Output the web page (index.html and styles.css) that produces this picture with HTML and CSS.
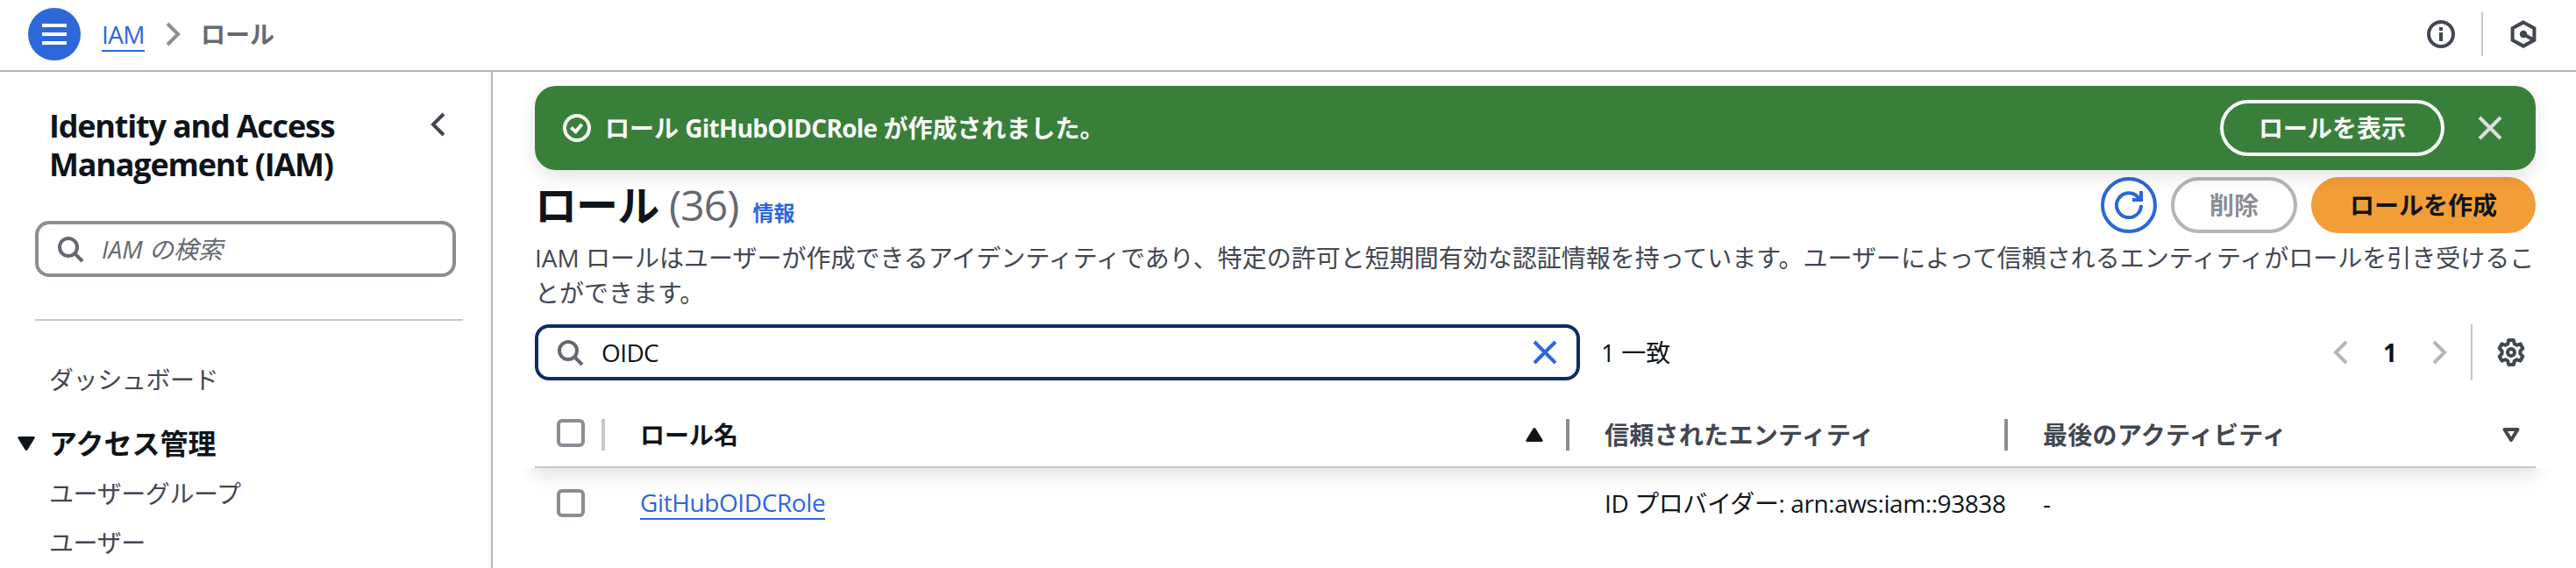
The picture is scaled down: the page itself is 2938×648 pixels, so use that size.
FILE: index.html
```html
<!DOCTYPE html>
<html lang="ja">
<head>
<meta charset="utf-8">
<title>IAM ロール</title>
<link rel="stylesheet" href="styles.css">
</head>
<body>
<header class="topbar">
  <button class="menu-btn" aria-label="メニュー"><svg class="icon" viewBox="0 0 16 16"><path d="M1 3h14M1 8h14M1 13h14"/></svg></button>
  <nav class="crumbs">
    <a class="link crumb-link" href="#">IAM</a>
    <svg class="icon crumb-sep" viewBox="0 0 16 16"><path d="m5 2 6 6-6 6"/></svg>
    <span class="crumb-current">ロール</span>
  </nav>
  <div class="tools">
    <svg class="icon" viewBox="0 0 16 16"><circle cx="8" cy="8" r="7"/><path d="M8 12V7M8 6V4"/></svg>
    <span class="tools-divider"></span>
    <svg class="icon" viewBox="0 0 16 16"><path d="M8 1.200 14.200 4.600v6.800L8 14.800 1.800 11.400V4.600z"/><circle class="solid" cx="8" cy="8" r="1.100"/><path d="m8.500 8.200 5 2.900"/></svg>
  </div>
</header>
<div class="shell">
  <aside class="sidebar">
    <div class="side-head">
      <h2 class="side-title">Identity and Access<br>Management (IAM)</h2>
      <svg class="icon side-close" viewBox="0 0 16 16"><path d="M11 2 5 8l6 6"/></svg>
    </div>
    <div class="search side-search">
      <svg class="icon search-icon" viewBox="0 0 16 16"><circle cx="7" cy="7" r="5"/><path d="m10.500 10.500 4.500 4.500"/></svg>
      <span class="placeholder">IAM の検索</span>
    </div>
    <hr class="side-rule">
    <ul class="side-nav">
      <li class="nav-item nav-first">ダッシュボード</li>
      <li class="nav-item nav-section"><svg class="caret" viewBox="0 0 20 16"><path d="M2 0h16q2.500 0 1.500 2L11.500 15q-1.500 2-3 0L.5 2Q-.5 0 2 0z"/></svg>アクセス管理</li>
      <li class="nav-item">ユーザーグループ</li>
      <li class="nav-item">ユーザー</li>
    </ul>
  </aside>
  <main class="main">
    <section class="flash">
      <svg class="icon" viewBox="0 0 16 16"><circle cx="8" cy="8" r="7"/><path d="m4.700 7.800 2.600 2.300 3.500-4.200"/></svg>
      <span class="flash-text">ロール <span class="flash-name">GitHubOIDCRole</span> が作成されました。</span>
      <button class="btn btn-flash">ロールを表示</button>
      <svg class="icon flash-close" viewBox="0 0 16 16"><path d="m2 2 12 12M14 2 2 14"/></svg>
    </section>
    <div class="page-head">
      <h1 class="page-title">ロール <span class="count">(36)</span></h1>
      <a class="info" href="#">情報</a>
      <div class="actions">
        <button class="btn btn-icon" aria-label="更新"><svg class="icon" viewBox="0 0 16 16"><path d="M15 8a7 7 0 1 1-1.800-4.600L14.500 5M15 0v5h-5"/></svg></button>
        <button class="btn btn-disabled">削除</button>
        <button class="btn btn-primary">ロールを作成</button>
      </div>
    </div>
    <p class="desc">IAM ロールはユーザーが作成できるアイデンティティであり、特定の許可と短期間有効な認証情報を持っています。ユーザーによって信頼されるエンティティがロールを引き受けるこ<br>とができます。</p>
    <div class="filter-row">
      <div class="search filter">
        <svg class="icon search-icon" viewBox="0 0 16 16"><circle cx="7" cy="7" r="5"/><path d="m10.500 10.500 4.500 4.500"/></svg>
        <span class="filter-value">OIDC</span>
        <svg class="icon filter-clear" viewBox="0 0 16 16"><path d="m2 2 12 12M14 2 2 14"/></svg>
      </div>
      <span class="matches">1 一致</span>
      <div class="pager">
        <svg class="icon muted" viewBox="0 0 16 16"><path d="M11 2 5 8l6 6"/></svg>
        <span class="page-no">1</span>
        <svg class="icon muted" viewBox="0 0 16 16"><path d="m5 2 6 6-6 6"/></svg>
        <span class="pager-divider"></span>
        <svg class="icon gear" viewBox="0 0 16 16"><path d="M6.600 1h2.800l.5 2.100 1.300.8 2.100-.7 1.400 2.500L13.200 7.200v1.600l1.500 1.500-1.400 2.500-2.100-.7-1.300.8-.5 2.100H6.600l-.5-2.100-1.300-.8-2.100.7-1.400-2.500 1.500-1.500V7.200L1.300 5.700l1.400-2.500 2.100.7 1.300-.8z"/><circle cx="8" cy="8" r="2"/></svg>
      </div>
    </div>
    <div class="table">
      <div class="row row-head">
        <span class="cell cell-check"><span class="checkbox"></span><span class="split split-light"></span></span>
        <span class="cell cell-name strong">ロール名<svg class="caret" viewBox="0 0 20 16"><path d="M2 16h16q2.500 0 1.500-2L11.500 1q-1.500-2-3 0L.5 14Q-.5 16 2 16z"/></svg><span class="split"></span></span>
        <span class="cell cell-entity">信頼されたエンティティ<span class="split"></span></span>
        <span class="cell cell-last">最後のアクティビティ<svg class="caret caret-open" viewBox="0 0 20 16"><path d="M2.500 2h15L10 14z"/></svg></span>
      </div>
      <div class="row row-body">
        <span class="cell cell-check"><span class="checkbox"></span></span>
        <span class="cell cell-name"><a class="link role-link" href="#">GitHubOIDCRole</a></span>
        <span class="cell cell-entity"><span class="arn">ID プロバイダー: arn:aws:iam::93838</span></span>
        <span class="cell cell-last">-</span>
      </div>
    </div>
  </main>
</div>
</body>
</html>
```
FILE: styles.css
```css
* { box-sizing: border-box; }
body {
  margin: 0;
  width: 2938px;
  height: 648px;
  overflow: hidden;
  background: #fff;
  color: #0f141a;
  font: 28px/40px "Open Sans", "Noto Sans CJK JP", sans-serif;
  white-space: nowrap;
}
h1, h2, p, ul { margin: 0; padding: 0; }
button { font: inherit; padding: 0; border: 0; }
.icon {
  width: 32px; height: 32px; flex: none; display: block;
  fill: none; stroke: currentColor; stroke-width: 2;
}
.icon .solid { fill: currentColor; }
.gear { stroke-linejoin: round; }
.link { color: #2b67d9; text-decoration: none; border-bottom: 2px solid #2b67d9; line-height: 36px; }

.topbar {
  height: 82px; display: flex; align-items: center;
  padding: 0 44px 2px 32px; border-bottom: 2px solid #b4b4bb;
}
.menu-btn {
  width: 60px; height: 60px; border-radius: 50%; background: #2c68d9; color: #fff;
  display: grid; place-items: center;
}
.crumbs { display: flex; align-items: center; margin-left: 24px; }
.crumb-link { letter-spacing: -0.6px; margin-top: 2px; }
.crumb-sep { margin: 0 16px; color: #8c8c94; }
.crumb-current { color: #656871; font-weight: 700; }
.tools { margin-left: auto; display: flex; align-items: center; color: #424650; }
.tools-divider { width: 2px; height: 50px; background: #c6c6cd; margin: 0 30px; }

.shell { display: flex; height: 566px; }
.sidebar { width: 562px; flex: none; border-right: 2px solid #b4b4bb; padding: 40px 32px 0 40px; }
.side-head { display: flex; justify-content: space-between; padding: 0 12px 0 16px; }
.side-title { font-size: 36px; line-height: 44px; font-weight: 700; letter-spacing: -1.2px; }
.side-close { color: #424650; margin-top: 4px; }
.search { height: 64px; border: 4px solid #8c8c94; border-radius: 16px; display: flex; align-items: center; padding: 0 20px; }
.side-search { width: 480px; margin-top: 42px; }
.search-icon { color: #656871; }
.placeholder { font-style: italic; color: #656871; margin-left: 20px; }
.side-rule { border: 0; height: 2px; background: #c6c6cd; margin: 48px 0 0; }
.side-nav { list-style: none; padding: 47px 0 0 16px; color: #424650; letter-spacing: -0.4px; }
.nav-item { height: 40px; margin-bottom: 16px; }
.nav-first { margin-bottom: 33px; }
.nav-section { display: flex; align-items: center; margin: 0 0 17px -36px; font-size: 32px; font-weight: 700; letter-spacing: 0; color: #0f141a; }
.caret { width: 20px; height: 16px; flex: none; fill: currentColor; }
.nav-section .caret { margin-right: 16px; }

.main { width: 2282px; margin: 16px 0 0 48px; }
.flash {
  position: relative; z-index: 1;
  height: 96px; border-radius: 24px; background: #38803a; color: #fafafa;
  display: flex; align-items: center; padding: 0 36px 0 32px;
  box-shadow: 0 8px 20px 1px rgba(0, 7, 22, .1);
}
.flash-text { font-weight: 700; margin-left: 16px; }
.flash-name { letter-spacing: -0.75px; }
.btn {
  height: 64px; border-radius: 32px; border: 4px solid currentColor; background: transparent;
  font-weight: 700; line-height: 56px; display: grid; place-items: center;
}
.btn-flash { width: 256px; margin-left: auto; color: #fafafa; }
.flash-close { margin-left: 36px; color: #dedee3; }
.page-head { display: flex; height: 72px; margin-top: 8px; }
.page-title { font-size: 48px; line-height: 64px; font-weight: 700; letter-spacing: -0.9px; }
.count { font-weight: 400; color: #656871; }
.info { font-size: 24px; line-height: 32px; font-weight: 700; color: #2b67d9; text-decoration: none; margin: 25px 0 0 16px; }
.actions { display: flex; gap: 16px; margin-left: auto; }
.btn-icon { width: 64px; color: #2b67d9; }
.btn-disabled { width: 144px; color: #8c8c94; border-color: #b4b4bb; }
.btn-primary { width: 256px; color: #0f141a; background: #f29e38; border-color: #f29e38; }
.desc { color: #424650; }
.filter-row { display: flex; align-items: center; margin-top: 16px; height: 64px; }
.filter { width: 1192px; border-color: #0d2c66; }
.filter-value { margin-left: 20px; letter-spacing: -0.6px; }
.filter-clear { margin-left: auto; color: #2b67d9; }
.matches { margin-left: 24px; }
.pager { display: flex; align-items: center; margin-left: auto; padding-right: 12px; color: #424650; }
.muted { color: #b4b4bb; }
.page-no { width: 80px; text-align: center; font-weight: 700; color: #0f141a; }
.pager-divider { width: 2px; height: 64px; background: #c6c6cd; margin: 0 28px 0 20px; }

.row { display: grid; grid-template-columns: 80px 1100px 500px 602px; }
.row-head { position: relative; height: 100px; padding-top: 22px; border-bottom: 2px solid #c6c6cd; font-weight: 700; letter-spacing: 0.3px; color: #424650; }
.row-head::after {
  content: ""; position: absolute; inset: 0 0 -2px;
  box-shadow: 0 8px 20px 1px rgba(0, 20, 15, .12);
  clip-path: inset(100% -24px -32px -24px);
}
.cell { display: flex; align-items: center; height: 80px; }
.row-body .cell { height: 79px; }
.strong { color: #0f141a; letter-spacing: 0; }
.cell-check { padding-left: 25px; }
.checkbox { width: 32px; height: 32px; border: 4px solid #8c8c94; border-radius: 6px; }
.row-head .checkbox { margin-bottom: 4px; }
.split { width: 4px; height: 36px; background: #8c8c94; margin-left: auto; }
.split-light { background: #c6c6cd; }
.cell-name, .cell-entity, .cell-last { padding-left: 40px; }
.role-link { letter-spacing: -0.4px; }
.arn { letter-spacing: -0.42px; }
.row-head .caret { margin-left: auto; }
.row-head .caret + .split { margin-left: 26px; }
.caret-open { fill: none; stroke: currentColor; stroke-width: 4; stroke-linejoin: round; margin-right: 18px; }
```
